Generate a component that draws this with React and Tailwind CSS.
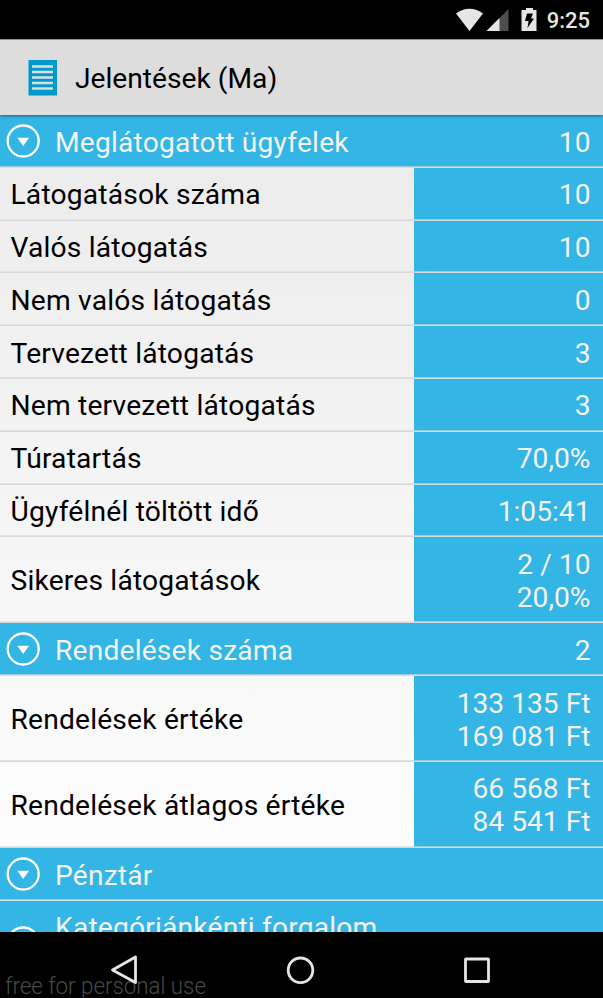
import React from 'react';

const sections = [
  {
    title: 'Meglátogatott ügyfelek',
    value: '10',
    rows: [
      { label: 'Látogatások száma', values: ['10'] },
      { label: 'Valós látogatás', values: ['10'] },
      { label: 'Nem valós látogatás', values: ['0'] },
      { label: 'Tervezett látogatás', values: ['3'] },
      { label: 'Nem tervezett látogatás', values: ['3'] },
      { label: 'Túratartás', values: ['70,0%'] },
      { label: 'Ügyfélnél töltött idő', values: ['1:05:41'] },
      { label: 'Sikeres látogatások', values: ['2 / 10', '20,0%'] },
    ],
  },
  {
    title: 'Rendelések száma',
    value: '2',
    rows: [
      { label: 'Rendelések értéke', values: ['133 135 Ft', '169 081 Ft'] },
      { label: 'Rendelések átlagos értéke', values: ['66 568 Ft', '84 541 Ft'] },
    ],
  },
  { title: 'Pénztár', value: '', rows: [] },
];

const ExpandIcon = ({ className = '' }) => (
  <svg className={`h-[34px] w-[34px] shrink-0 ${className}`} viewBox="0 0 34 34" fill="none">
    <circle cx="17.200" cy="17" r="15.500" stroke="#fff" strokeWidth="2.300" />
    <path d="M11.300 13.800h11.800l-5.900 8.200z" fill="#fff" />
  </svg>
);

const StatusBar = () => (
  <div className="flex h-[39px] shrink-0 items-center bg-black pr-[13px]">
    <svg className="ml-auto h-[39px] w-[91px]" viewBox="0 0 91 39">
      <path d="M0 13.500C8 7.200 19 7.200 27 13.500L13.500 31z" fill="#e6e6e6" />
      <path d="M52.500 9v22h-22z" fill="#4d4d4d" />
      <path d="M43.500 18v13h-13z" fill="#e6e6e6" />
      <path d="M70 8h7v2h3.500v21h-15V10H70z" fill="#e6e6e6" />
      <path d="M71 13.500h6l-2 5h3l-6.500 9.500 1-7h-3.500z" fill="#000" />
    </svg>
    <span className="pt-[2px] text-[22px] leading-none font-medium text-[#e6e6e6]">9:25</span>
  </div>
);

const TitleBar = () => (
  <div className="relative z-10 flex h-[76px] shrink-0 items-center border-t border-[#8f8f8f] bg-[#dddddd] pl-[28px] shadow-[0_1px_3px_rgba(0,0,0,0.45)]">
    <svg className="h-[36px] w-[29px]" viewBox="0 0 29 36">
      <rect x="0.500" width="28.500" height="35.500" fill="#0099cc" />
      <path d="M4 6.500h21M4 12h21M4 17.500h21M4 23h21M4 28.500h21" stroke="#dddddd" strokeWidth="2.400" />
    </svg>
    <h1 className="ml-[18px] pt-[2px] text-[28.2px] leading-[33px] text-black">Jelentések (Ma)</h1>
  </div>
);

const SectionHeader = ({ title, value }) => (
  <div className="flex h-[52.8px] shrink-0 items-center border-b border-[#dcdcdc] bg-[#33b5e5] pr-[12.5px] pl-[6px] text-[#f3f3f3] shadow-[inset_0_-1px_0_#9fcddd]">
    <ExpandIcon />
    <span className="ml-[15px] pt-[3px] tracking-[0.19px]">{title}</span>
    <span className="ml-auto pt-[3px]">{value}</span>
  </div>
);

const Row = ({ label, values }) => (
  <div className={`flex shrink-0 border-b border-[#d8d8d8] ${values.length > 1 ? 'h-[85.9px]' : 'h-[52.8px]'}`}>
    <div className="flex w-[414px] items-center border-b border-[#e2e2e2] pt-[3px] pl-[10.5px] tracking-[0.19px] text-black">
      {label}
    </div>
    <div className="flex flex-1 flex-col justify-center border-b border-[#9fcddd] bg-[#33b5e5] pt-[3px] pr-[12.5px] text-right text-[#f3f3f3]">
      {values.map((value) => (
        <div key={value}>{value}</div>
      ))}
    </div>
  </div>
);

const NavBar = () => (
  <div className="relative flex h-[66px] shrink-0 items-center bg-black">
    <span className="absolute bottom-0 left-[5px] origin-left scale-x-[0.91] text-[24.500px] leading-[24px] font-light whitespace-nowrap text-[#484848]">
      free for personal use
    </span>
    <svg className="relative h-[66px] w-[603px]" viewBox="0 0 603 66" fill="none" stroke="#e6e6e6">
      <path d="M135.500 25v25.500L112.500 38z" strokeWidth="2.800" strokeLinejoin="round" />
      <circle cx="300.500" cy="38.300" r="12.300" strokeWidth="2.800" />
      <rect x="465.500" y="27" width="23" height="22.500" rx="0.500" strokeWidth="2.800" />
    </svg>
  </div>
);

const App = () => (
  <div className="flex h-[998px] w-[603px] flex-col overflow-hidden bg-black font-['Roboto',sans-serif]">
    <StatusBar />
    <TitleBar />
    <main className="flex min-h-0 flex-1 flex-col overflow-hidden bg-linear-to-b from-[#ebebeb] to-white text-[28.2px] leading-[33px]">
      {sections.map((section) => (
        <React.Fragment key={section.title}>
          <SectionHeader title={section.title} value={section.value} />
          {section.rows.map((row) => (
            <Row key={row.label} label={row.label} values={row.values} />
          ))}
        </React.Fragment>
      ))}

      {/* Last section is cut off by the navigation bar */}
      <div className="flex h-[86px] shrink-0 bg-[#33b5e5] pt-[10px] pl-[6px] text-[#f3f3f3]">
        <ExpandIcon className="mt-[15px]" />
        <span className="ml-[15px] tracking-[0.19px]">Kategóriánkénti forgalom</span>
      </div>
    </main>
    <NavBar />
  </div>
);

export default App;
